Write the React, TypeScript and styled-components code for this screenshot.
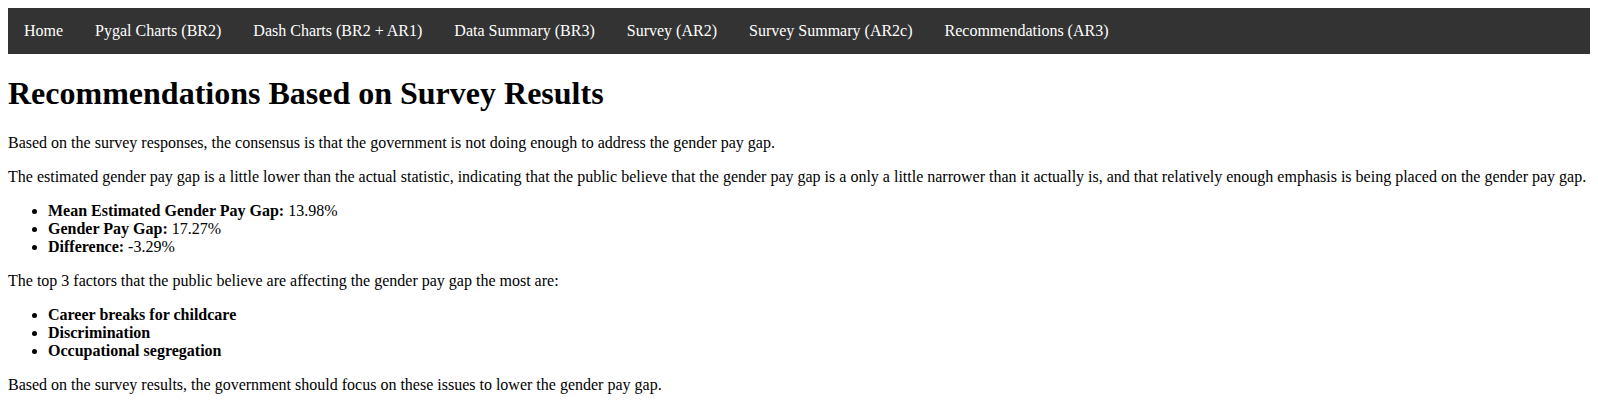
import React from "react";
import styled, { createGlobalStyle } from "styled-components";

const GlobalStyle = createGlobalStyle`
  body {
    margin: 8px;
    background: #ffffff;
    color: #000000;
    font-family: "Liberation Serif", "Times New Roman", serif;
    font-size: 16px;
  }
`;

const NavBar = styled.nav`
  display: flex;
  background-color: #333333;
  overflow: hidden;
`;

const NavLink = styled.a`
  display: block;
  color: #ffffff;
  text-align: center;
  padding: 14px 16px;
  text-decoration: none;
  font-size: 16px;
  line-height: 18px;
  cursor: pointer;
`;

const Title = styled.h1`
  font-size: 2em;
  font-weight: bold;
  margin: 0.67em 0;
`;

const Paragraph = styled.p`
  margin: 1em 0;
`;

const List = styled.ul`
  margin: 1em 0;
  padding-left: 40px;
  list-style-type: disc;
`;

const Item = styled.li`
  display: list-item;
`;

const links = [
  "Home",
  "Pygal Charts (BR2)",
  "Dash Charts (BR2 + AR1)",
  "Data Summary (BR3)",
  "Survey (AR2)",
  "Survey Summary (AR2c)",
  "Recommendations (AR3)",
];

const stats = [
  { label: "Mean Estimated Gender Pay Gap:", value: "13.98%" },
  { label: "Gender Pay Gap:", value: "17.27%" },
  { label: "Difference:", value: "-3.29%" },
];

const factors = ["Career breaks for childcare", "Discrimination", "Occupational segregation"];

export default function App() {
  return (
    <>
      <GlobalStyle />
      <NavBar>
        {links.map((l) => (
          <NavLink key={l}>{l}</NavLink>
        ))}
      </NavBar>
      <Title>Recommendations Based on Survey Results</Title>
      <Paragraph>
        Based on the survey responses, the consensus is that the government is not doing enough to address the gender pay gap.
      </Paragraph>
      <Paragraph>
        The estimated gender pay gap is a little lower than the actual statistic, indicating that the public believe that the gender pay gap is a only a little narrower than it actually is, and that relatively enough emphasis is being placed on the gender pay gap.
      </Paragraph>
      <List>
        {stats.map((s) => (
          <Item key={s.label}>
            <strong>{s.label}</strong> {s.value}
          </Item>
        ))}
      </List>
      <Paragraph>The top 3 factors that the public believe are affecting the gender pay gap the most are:</Paragraph>
      <List>
        {factors.map((f) => (
          <Item key={f}>
            <strong>{f}</strong>
          </Item>
        ))}
      </List>
      <Paragraph>Based on the survey results, the government should focus on these issues to lower the gender pay gap.</Paragraph>
    </>
  );
}
